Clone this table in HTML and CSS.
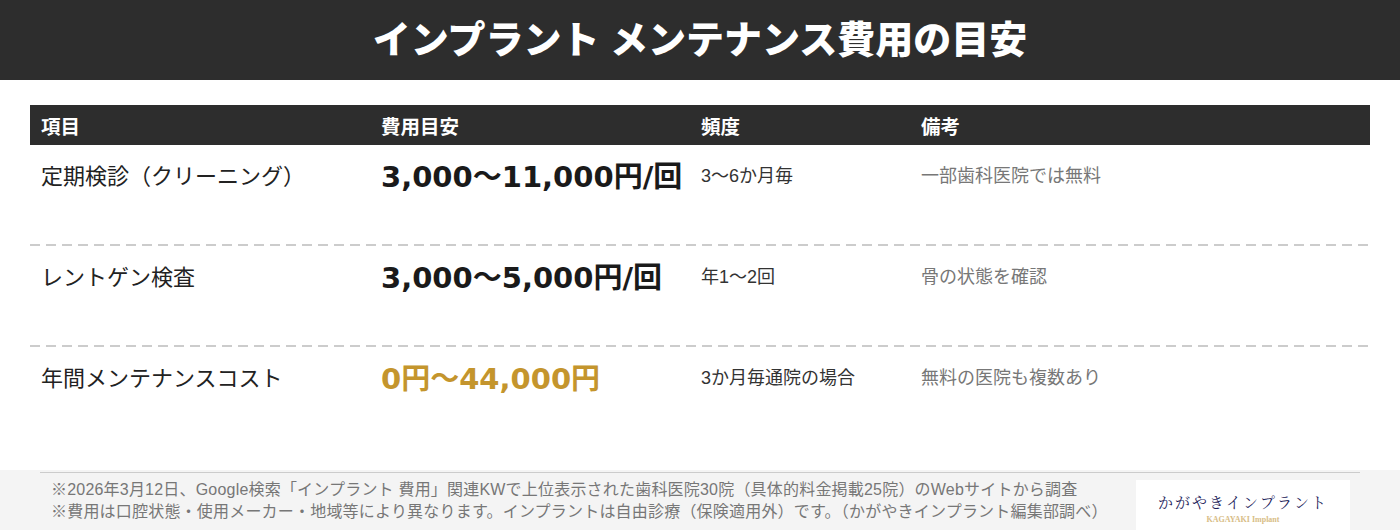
FILE: index.html
```html
<!DOCTYPE html>
<html lang="ja">
<head>
<meta charset="utf-8">
<link rel="stylesheet" href="styles.css">
</head>
<body>
<header class="title-bar">
  <h1>インプラント メンテナンス費用の目安</h1>
</header>
<main class="content">
  <div class="table">
    <div class="thead">
      <div class="th">項目</div>
      <div class="th">費用目安</div>
      <div class="th">頻度</div>
      <div class="th">備考</div>
    </div>
    <div class="row">
      <div class="cell label">定期検診（クリーニング）</div>
      <div class="cell price">3,000～11,000円/回</div>
      <div class="cell freq">3～6か月毎</div>
      <div class="cell note">一部歯科医院では無料</div>
    </div>
    <div class="sep"></div>
    <div class="row">
      <div class="cell label">レントゲン検査</div>
      <div class="cell price">3,000～5,000円/回</div>
      <div class="cell freq">年1～2回</div>
      <div class="cell note">骨の状態を確認</div>
    </div>
    <div class="sep"></div>
    <div class="row">
      <div class="cell label">年間メンテナンスコスト</div>
      <div class="cell price gold">0円～44,000円</div>
      <div class="cell freq">3か月毎通院の場合</div>
      <div class="cell note">無料の医院も複数あり</div>
    </div>
  </div>
</main>
<footer class="footer">
  <div class="footer-inner">
    <div class="notes">
      <p>※2026年3月12日、Google検索「インプラント 費用」関連KWで上位表示された歯科医院30院（具体的料金掲載25院）のWebサイトから調査</p>
      <p>※費用は口腔状態・使用メーカー・地域等により異なります。インプラントは自由診療（保険適用外）です。（かがやきインプラント編集部調べ）</p>
    </div>
    <div class="logo">
      <div class="logo-jp">かがやきインプラント</div>
      <div class="logo-en">KAGAYAKI Implant</div>
    </div>
  </div>
</footer>
</body>
</html>
```
FILE: styles.css
```css
* { box-sizing: border-box; }
html, body { margin: 0; padding: 0; }
body {
  width: 1400px;
  height: 530px;
  overflow: hidden;
  background: #ffffff;
  font-family: "Liberation Sans", "Noto Sans CJK JP", sans-serif;
  color: #222;
}
.title-bar {
  height: 80px;
  background: #2d2d2d;
  display: flex;
  align-items: center;
  justify-content: center;
}
.title-bar h1 {
  margin: 0;
  color: #fff;
  font-size: 38px;
  font-weight: 900;
  line-height: 1;
}
.content {
  height: 390px;
  padding: 25px 30px 0;
}
.thead, .row {
  display: grid;
  grid-template-columns: 340px 320px 220px 1fr;
}
.thead {
  height: 40px;
  background: #2d2d2d;
  align-items: center;
}
.th {
  color: #fff;
  font-weight: 700;
  font-size: 19.5px;
  padding-left: 11px;
}
.row {
  height: 99px;
  padding-top: 14px;
  align-items: start;
}
.cell {
  height: 30px;
  display: flex;
  align-items: center;
  padding-left: 11px;
  white-space: nowrap;
}
.label { font-size: 22px; color: #222; }
.price {
  font-family: "DejaVu Sans", "Noto Sans CJK JP", sans-serif;
  font-size: 29px;
  font-weight: 700;
  color: #1a1a1a;
}
.price.gold { color: #c4952d; }
.freq { font-size: 18px; color: #333; }
.note { font-size: 18px; color: #777; }
.sep {
  height: 2px;
  background: repeating-linear-gradient(to right, #cccccc 0 10px, transparent 10px 16px);
}
.footer {
  height: 60px;
  background: #f4f4f4;
  padding: 2px 40px 0;
}
.footer-inner {
  border-top: 1px solid #cccccc;
  display: flex;
  justify-content: space-between;
  height: 100%;
}
.notes {
  padding: 6px 0 0 11px;
}
.notes p {
  margin: 0;
  font-size: 16px;
  line-height: 22px;
  letter-spacing: 0.2px;
  color: #777;
}
.logo {
  width: 214px;
  margin: 7px 10px 0 0;
  background: #fff;
  display: flex;
  flex-direction: column;
  align-items: center;
  padding-top: 12px;
}
.logo-jp {
  font-family: "Noto Serif CJK JP", "Liberation Serif", "Noto Sans CJK JP", serif;
  font-size: 15px;
  letter-spacing: 2px;
  color: #1c1c5a;
  line-height: 20px;
}
.logo-en {
  font-family: "Liberation Serif", serif;
  font-size: 8px;
  color: #d8bd86;
  font-weight: 700;
  line-height: 10px;
  margin-top: 3px;
}
```
